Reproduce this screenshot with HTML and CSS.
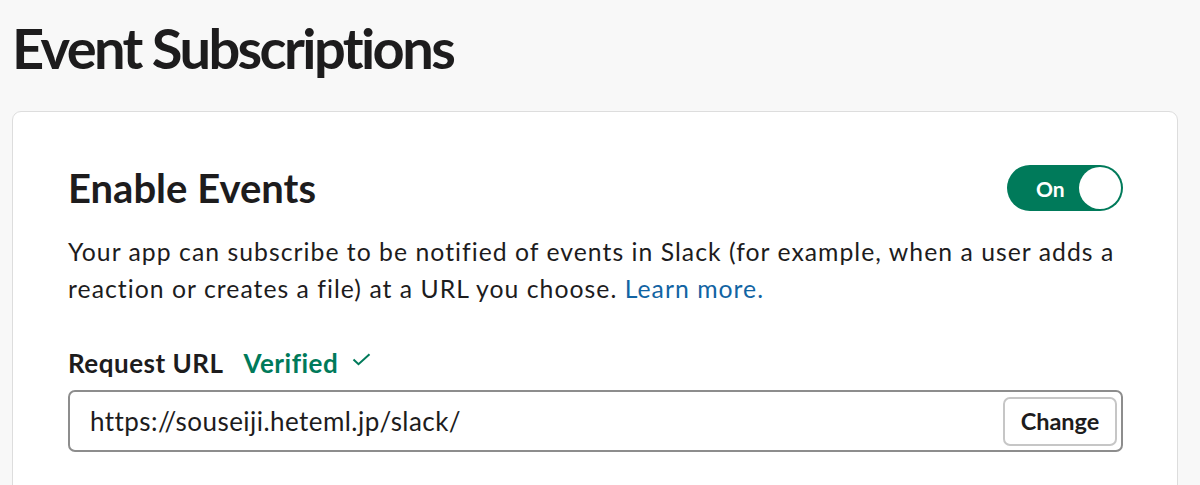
FILE: index.html
```html
<!DOCTYPE html>
<html lang="en">
<head>
<meta charset="utf-8">
<title>Event Subscriptions</title>
<link rel="stylesheet" href="styles.css">
</head>
<body>
<main class="page">
  <h1 class="page-title">Event Subscriptions</h1>
  <section class="card">
    <div class="card-head">
      <h2 class="card-title">Enable Events</h2>
      <button class="toggle" type="button" aria-pressed="true">
        <span class="toggle-label">On</span>
        <span class="toggle-knob"></span>
      </button>
    </div>
    <p class="desc">Your app can subscribe to be notified of events in Slack (for example, when a user adds a reaction or creates a file) at a URL you choose. <a class="link" href="#">Learn more.</a></p>
    <div class="field-label">
      <span class="label">Request URL</span>
      <span class="verified">Verified
        <svg class="check" viewBox="0 0 19 13" width="19" height="13" aria-hidden="true"><path d="M1.5 6.5 L6.5 11.2 L17.5 1.2" fill="none" stroke="#007a5a" stroke-width="2"/></svg>
      </span>
    </div>
    <div class="url-input">
      <span class="url-text">https://souseiji.heteml.jp/slack/</span>
      <button class="change-btn" type="button">Change</button>
    </div>
  </section>
</main>
</body>
</html>
```

FILE: styles.css
```css
* { box-sizing: border-box; }
html, body {
  margin: 0;
  padding: 0;
  background: #f8f8f8;
  font-family: Lato, "Noto Sans", sans-serif;
  color: #1d1c1d;
}
.page {
  padding: 14px 22px 0 12px;
}
.page-title {
  margin: 0;
  font-size: 56px;
  font-weight: 700;
  line-height: 67px;
  letter-spacing: -2.6px;
}
.card {
  margin-top: 30px;
  background: #fff;
  border: 1px solid #dddddd;
  border-radius: 9px;
  padding: 52px 54px 40px 55px;
  height: 420px;
}
.card-head {
  display: flex;
  align-items: center;
  justify-content: space-between;
}
.card-title {
  margin: 0;
  font-size: 40px;
  font-weight: 700;
  line-height: 48px;
}
.toggle {
  display: flex;
  align-items: center;
  justify-content: space-between;
  width: 116px;
  height: 46px;
  border: none;
  border-radius: 23px;
  background: #007a5a;
  padding: 2px 2px 2px 29px;
  cursor: pointer;
}
.toggle-label {
  color: #fff;
  font-family: Lato, sans-serif;
  font-weight: 700;
  font-size: 21px;
}
.toggle-knob {
  width: 42px;
  height: 42px;
  border-radius: 50%;
  background: #fff;
}
.desc {
  margin: 21px 0 0 0;
  font-size: 24.75px;
  line-height: 37px;
  letter-spacing: 1.03px;
}
.link {
  color: #1264a3;
  text-decoration: none;
}
.field-label {
  margin-top: 38px;
  display: flex;
  align-items: baseline;
  gap: 20px;
  font-size: 26px;
  line-height: 36px;
  font-weight: 700;
  letter-spacing: 0.5px;
}
.verified {
  color: #007a5a;
  display: inline-flex;
  align-items: baseline;
  gap: 14px;
}
.check {
  align-self: center;
  position: relative;
  top: -4px;
}
.url-input {
  margin-top: 9px;
  height: 62px;
  border: 2px solid #8d8d8d;
  border-radius: 7px;
  display: flex;
  align-items: center;
  justify-content: space-between;
  padding: 0 4px 0 20px;
}
.url-text {
  font-size: 26px;
  letter-spacing: 0.45px;
}
.change-btn {
  height: 49px;
  width: 114px;
  border: 2px solid #c6c6c6;
  border-radius: 7px;
  background: #fff;
  font-family: Lato, sans-serif;
  font-weight: 700;
  font-size: 23.5px;
  color: #1d1c1d;
  padding: 0;
}
```
